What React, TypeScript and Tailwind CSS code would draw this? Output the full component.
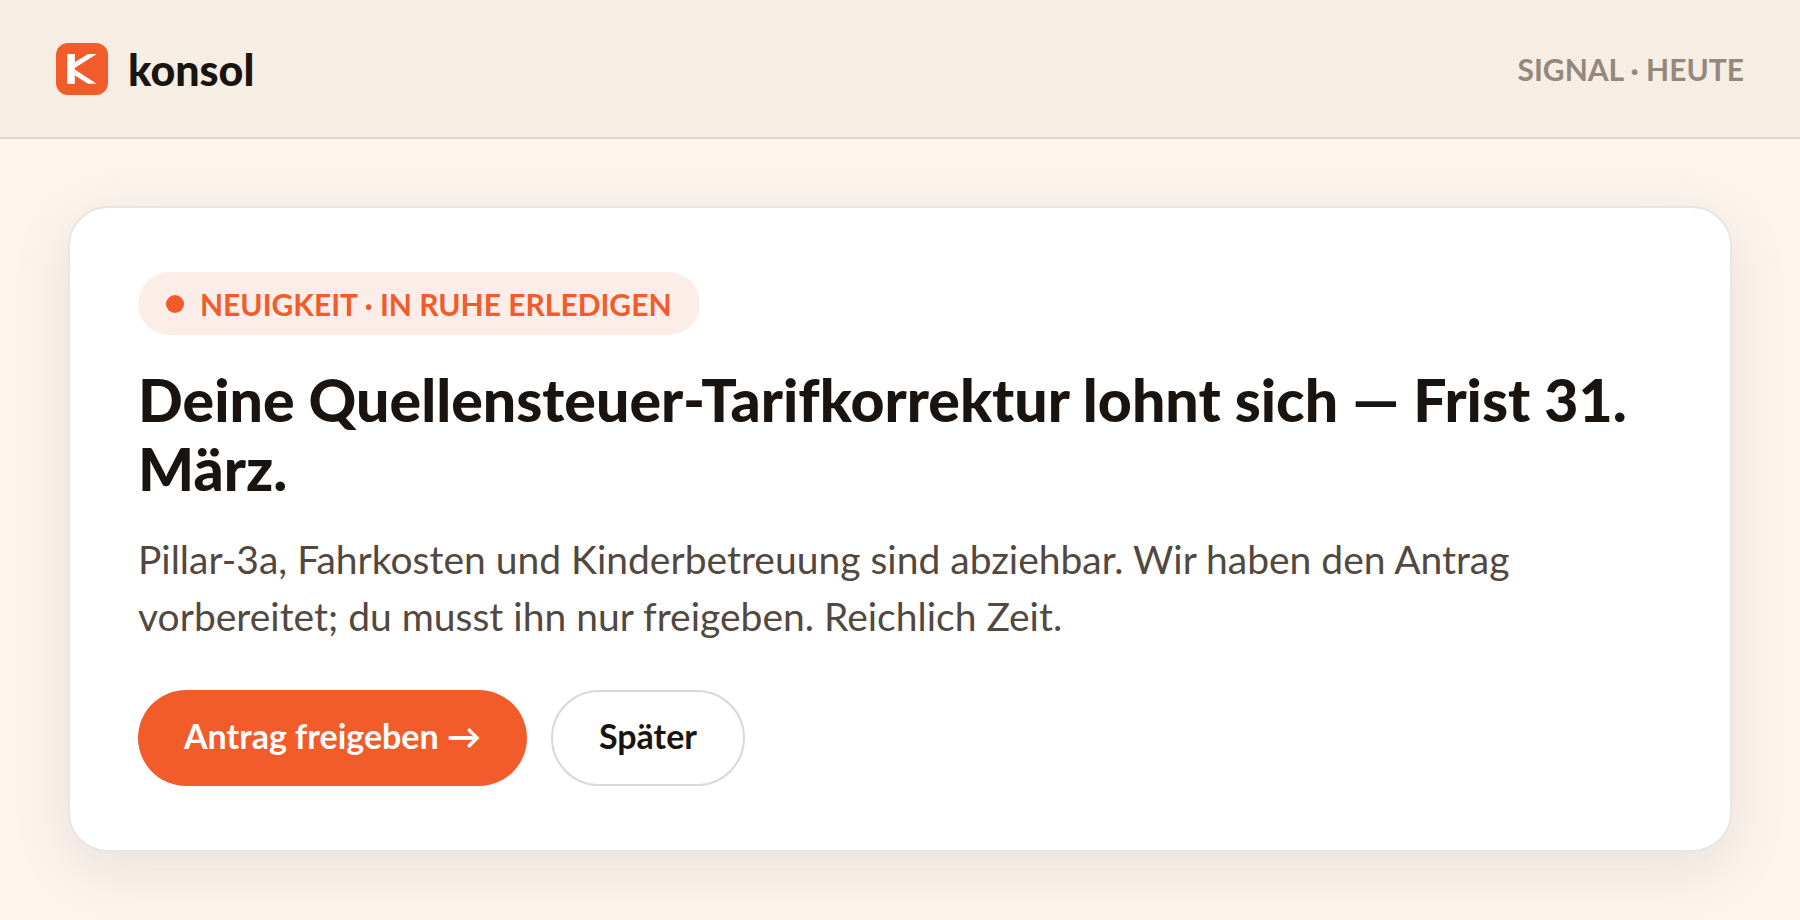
function Logo() {
  return (
    <svg viewBox="0 0 52 52" className="size-13" aria-hidden="true">
      <rect width="52" height="52" rx="12" fill="#f25c2b" />
      <path d="M11.2 11h7.6v29.8h-7.6z" fill="#fff" />
      <path d="M18.7 19.2 32 11h8.6L18.7 25v1.4L40.6 40.8H32L18.7 32.2z" fill="#fff" />
    </svg>
  );
}

export default function App() {
  return (
    <div className="min-h-screen bg-[#fdf4ee] font-['Lato',sans-serif] text-[#1a1410] [font-variant-ligatures:none]">
      <header className="flex items-center justify-between border-b-2 border-[#ddd5cb] bg-[#f6eee3] px-14 pt-[43px] pb-[42px]">
        <a href="#" className="flex items-center gap-5">
          <Logo />
          <span className="text-[43px] leading-none font-black">konsol</span>
        </a>
        <p className="text-3xl leading-none font-bold text-[#94877e]">SIGNAL · HEUTE</p>
      </header>

      <main className="px-17 pt-[67px] pb-[66px]">
        <article className="flex flex-col items-start rounded-[40px] border-2 border-[#e6e6e6] bg-white px-17 py-16 shadow-[0_16px_64px_rgba(26,20,16,0.09)]">
          <p className="flex h-[63px] items-center gap-4 rounded-full bg-[#fdede9] px-7 text-3xl leading-none font-bold text-[#f25c2b]">
            <span className="size-[18px] rounded-full bg-[#f25c2b]" />
            NEUIGKEIT · IN RUHE ERLEDIGEN
          </p>
          <h1 className="mt-[30px] text-[59px] leading-[69px] font-black">
            Deine Quellensteuer-Tarifkorrektur lohnt sich — Frist 31. März.
          </h1>
          <p className="mt-7 text-[39px] leading-[57px] text-[#534840]">
            Pillar-3a, Fahrkosten und Kinderbetreuung sind abziehbar. Wir haben den Antrag vorbereitet; du musst ihn nur
            freigeben. Reichlich Zeit.
          </p>
          <div className="mt-[45px] flex gap-6 text-[34px] leading-none font-bold">
            <button type="button" className="h-24 rounded-full bg-[#f25c2b] px-[46px] pb-1 text-white">
              Antrag freigeben →
            </button>
            <button type="button" className="h-24 rounded-full border-2 border-[#d8d8d8] bg-white px-[46px] pb-1">
              Später
            </button>
          </div>
        </article>
      </main>
    </div>
  );
}
